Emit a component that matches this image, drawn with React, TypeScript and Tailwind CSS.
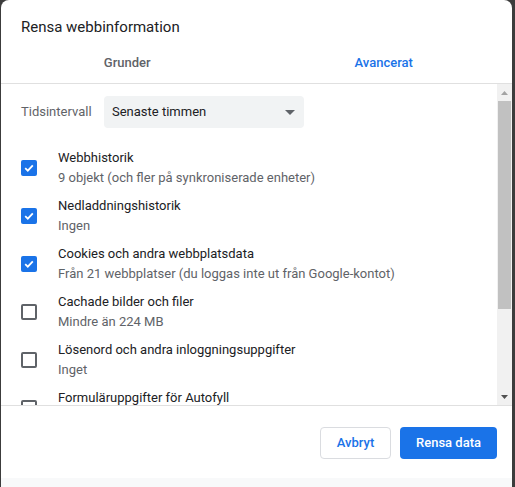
import React from "react";

const F = { fontFamily: "Roboto, 'Liberation Sans', sans-serif" };

function Check({ checked }: { checked: boolean }) {
  if (checked) {
    return (
      <div className="w-4 h-4 rounded-[2px] bg-[#1a73e8] flex items-center justify-center shrink-0">
        <svg width="12" height="12" viewBox="0 0 12 12">
          <path d="M2.2 6.2 L4.8 8.7 L9.8 3.4" fill="none" stroke="white" strokeWidth="1.8" />
        </svg>
      </div>
    );
  }
  return <div className="w-4 h-4 rounded-[2px] border-2 border-[#5f6368] shrink-0" />;
}

const rows = [
  { t: "Webbhistorik", s: "9 objekt (och fler på synkroniserade enheter)", c: true },
  { t: "Nedladdningshistorik", s: "Ingen", c: true },
  { t: "Cookies och andra webbplatsdata", s: "Från 21 webbplatser (du loggas inte ut från Google-kontot)", c: true },
  { t: "Cachade bilder och filer", s: "Mindre än 224 MB", c: false },
  { t: "Lösenord och andra inloggningsuppgifter", s: "Inget", c: false },
  { t: "Formuläruppgifter för Autofyll", s: "", c: false },
];

export default function App() {
  return (
    <div className="w-[515px] h-[487px] bg-[#3c3c3c] pl-[1px] pr-[3px] overflow-hidden" style={F}>
      <div className="w-full h-full bg-white rounded-t-[8px] flex flex-col overflow-hidden">
        <div className="h-[44px] shrink-0 pl-[20px] pt-[17px] text-[15px] leading-[20px] text-[#202124]">
          Rensa webbinformation
        </div>
        <div className="flex h-[40px] shrink-0 border-b border-[#e0e0e0] text-[13px] font-medium">
          <div className="flex-1 flex items-center justify-center text-[#5f6368] pb-[1px] pr-[4px]">Grunder</div>
          <div className="flex-1 flex items-center justify-center text-[#1a73e8] pb-[1px] pr-[2px]">Avancerat</div>
        </div>
        <div className="flex h-[322px] shrink-0 border-b border-[#e0e0e0]">
          <div className="flex-1 overflow-hidden pt-[12px]">
            <div className="flex items-center pl-[20px] gap-[12px]">
              <span className="text-[13px] text-[#5f6368] w-[71px]">Tidsintervall</span>
              <div className="w-[200px] h-[32px] bg-[#f1f3f4] rounded-[4px] flex items-center justify-between pl-[8px] pr-[9px]">
                <span className="text-[13px] text-[#202124]">Senaste timmen</span>
                <svg width="10" height="5" viewBox="0 0 10 5">
                  <path d="M0 0 L10 0 L5 5 Z" fill="#5f6368" />
                </svg>
              </div>
            </div>
            <div className="pt-[20px] flex flex-col gap-[8px]">
              {rows.map((r) => (
                <div key={r.t} className="flex items-center pl-[20px] gap-[21px] h-[40px]">
                  <Check checked={r.c} />
                  <div className="flex flex-col text-[13px] leading-[20px]">
                    <span className="text-[#202124] whitespace-nowrap">{r.t}</span>
                    <span className="text-[#5f6368] whitespace-nowrap">{r.s || "\u00a0"}</span>
                  </div>
                </div>
              ))}
            </div>
          </div>
          <div className="w-[15px] bg-[#f1f1f1] flex flex-col">
            <div className="h-[17px] flex items-center justify-center">
              <svg width="7" height="4" viewBox="0 0 7 4">
                <path d="M0 4 L7 4 L3.5 0 Z" fill="#a3a3a3" />
              </svg>
            </div>
            <div className="mx-[1px] h-[208px] bg-[#c1c1c1]" />
            <div className="flex-1" />
            <div className="h-[17px] flex items-center justify-center">
              <svg width="7" height="4" viewBox="0 0 7 4">
                <path d="M0 0 L7 0 L3.5 4 Z" fill="#505050" />
              </svg>
            </div>
          </div>
        </div>
        <div className="h-[72px] shrink-0 flex items-center justify-end gap-[9px] pr-[15px] pt-[2px]">
          <button className="h-[32px] w-[71px] rounded-[4px] border border-[#dadce0] bg-white text-[#1a73e8] text-[13px] font-medium">
            Avbryt
          </button>
          <button className="h-[32px] w-[97px] rounded-[4px] bg-[#1a73e8] text-white text-[13px] font-medium">
            Rensa data
          </button>
        </div>
        <div className="flex-1 bg-[#f8f9fa]" />
      </div>
    </div>
  );
}
